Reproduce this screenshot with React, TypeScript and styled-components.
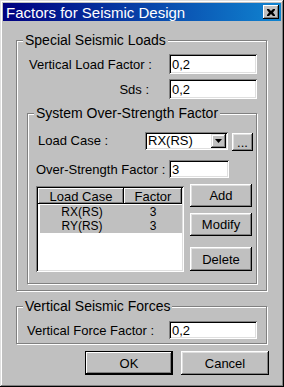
import styled, { createGlobalStyle } from "styled-components"

const GlobalStyle = createGlobalStyle`
  html, body {
    margin: 0;
    padding: 0;
    background: #c0c0c0;
  }
  body {
    font-family: "Liberation Sans", Arial, sans-serif;
    font-size: 13px;
    color: #000;
  }
`;

const Window = styled.div`
  width: 284px;
  height: 387px;
  box-sizing: border-box;
  padding: 3px;
  background: #c0c0c0;
  box-shadow: inset -1px -1px #000, inset 1px 1px #dfdfdf, inset -2px -2px #808080, inset 2px 2px #fff;
  display: flex;
  flex-direction: column;
`;

const TitleBar = styled.div`
  height: 18px;
  display: flex;
  align-items: center;
  justify-content: space-between;
  padding: 0 2px 0 3px;
  background: linear-gradient(to right, #000080, #1084d0);
  color: #fff;
  font-size: 15px;
`;

const CloseButton = styled.div`
  width: 16px;
  height: 14px;
  box-sizing: border-box;
  background: #c0c0c0;
  box-shadow: inset -1px -1px #000, inset 1px 1px #fff, inset -2px -2px #808080;
  display: flex;
  align-items: center;
  justify-content: center;
`;

const Body = styled.div`
  display: flex;
  flex-direction: column;
  padding-left: 13px;
`;

const GroupBox = styled.div<{ $width: number; $mt: number; $ml?: number; $pb: number; $pl: number }>`
  width: ${(p) => p.$width}px;
  box-sizing: border-box;
  margin-top: ${(p) => p.$mt}px;
  margin-left: ${(p) => p.$ml ?? 0}px;
  padding: 0 0 ${(p) => p.$pb}px ${(p) => p.$pl}px;
  border: 1px solid #808080;
  box-shadow: inset 1px 1px #fff, 1px 1px #fff;
  display: flex;
  flex-direction: column;
`;

const Legend = styled.div<{ $ml: number }>`
  width: fit-content;
  height: 14px;
  line-height: 14px;
  margin: -8px 0 0 ${(p) => p.$ml}px;
  padding: 0 2px;
  background: #c0c0c0;
  font-size: 14px;
  white-space: nowrap;
`;

const Row = styled.div<{ $mt: number }>`
  display: flex;
  align-items: center;
  margin-top: ${(p) => p.$mt}px;
`;

const Label = styled.div<{ $width: number; $right?: boolean; $ml?: number }>`
  width: ${(p) => p.$width}px;
  margin-left: ${(p) => p.$ml ?? 0}px;
  text-align: ${(p) => (p.$right ? "right" : "left")};
  white-space: nowrap;
  flex-shrink: 0;
`;

const TextBox = styled.div<{ $width: number; $height: number; $ml?: number }>`
  width: ${(p) => p.$width}px;
  height: ${(p) => p.$height}px;
  margin-left: ${(p) => p.$ml ?? 0}px;
  box-sizing: border-box;
  padding: 0 3px;
  background: #fff;
  box-shadow: inset 1px 1px #808080, inset -1px -1px #fff, inset 2px 2px #000, inset -2px -2px #dfdfdf;
  display: flex;
  align-items: center;
  font-size: 13px;
  flex-shrink: 0;
`;

const Combo = styled(TextBox)`
  padding-right: 2px;
  justify-content: space-between;
`;

const DropButton = styled.div`
  width: 15px;
  height: 14px;
  box-sizing: border-box;
  background: #c0c0c0;
  box-shadow: inset -1px -1px #000, inset 1px 1px #dfdfdf, inset -2px -2px #808080, inset 2px 2px #fff;
  display: flex;
  align-items: center;
  justify-content: center;
`;

const Button = styled.div<{ $width: number; $height: number; $mt?: number; $ml?: number; $default?: boolean }>`
  width: ${(p) => p.$width}px;
  height: ${(p) => p.$height}px;
  margin-top: ${(p) => p.$mt ?? 0}px;
  margin-left: ${(p) => p.$ml ?? 0}px;
  box-sizing: border-box;
  background: #c0c0c0;
  display: flex;
  align-items: center;
  justify-content: center;
  font-size: 13px;
  flex-shrink: 0;
  box-shadow: ${(p) =>
    p.$default
      ? "inset 0 0 0 1px #000, inset -2px -2px #000, inset 2px 2px #fff, inset -3px -3px #808080"
      : "inset -1px -1px #000, inset 1px 1px #fff, inset -2px -2px #808080, inset 2px 2px #dfdfdf"};
`;

const ListRow = styled.div`
  display: flex;
  align-items: flex-start;
  margin-top: 6px;
  gap: 6px;
`;

const ListView = styled.div`
  width: 148px;
  height: 86px;
  margin-top: 2px;
  box-sizing: border-box;
  padding: 2px;
  background: #fff;
  box-shadow: inset 1px 1px #808080, inset -1px -1px #fff, inset 2px 2px #000, inset -2px -2px #dfdfdf;
  display: flex;
  flex-direction: column;
`;

const HeaderRow = styled.div`
  display: flex;
  height: 16px;
`;

const HeaderCell = styled.div<{ $width?: number }>`
  ${(p) => (p.$width ? `width: ${p.$width}px;` : "flex: 1;")}
  box-sizing: border-box;
  background: #c0c0c0;
  box-shadow: inset -1px -1px #000, inset 1px 1px #fff, inset -2px -2px #808080;
  display: flex;
  align-items: center;
  justify-content: center;
  font-size: 13px;
`;

const ItemRow = styled.div<{ $first?: boolean }>`
  display: flex;
  height: 14px;
  line-height: 14px;
  margin-left: 2px;
  margin-top: ${(p) => (p.$first ? 1 : 0)}px;
  background: #c0c0c0;
  font-size: 12px;
`;

const ItemCell = styled.div<{ $width?: number }>`
  ${(p) => (p.$width ? `width: ${p.$width}px;` : "flex: 1;")}
  text-align: center;
`;

const ButtonColumn = styled.div`
  display: flex;
  flex-direction: column;
`;

const Footer = styled.div`
  display: flex;
  justify-content: flex-end;
  gap: 8px;
  margin-top: 7px;
  padding-right: 12px;
`;

const rows = [
  { name: "RX(RS)", factor: "3" },
  { name: "RY(RS)", factor: "3" },
]

const App = () => {
  return (
    <>
      <GlobalStyle />
      <Window>
        <TitleBar>
          <span>Factors for Seismic Design</span>
          <CloseButton>
            <svg width="8" height="7" viewBox="0 0 8 7">
              <path d="M0 0h2l2 2 2-2h2v1L6 3.5 8 6v1H6L4 5 2 7H0V6l2-2.5L0 1z" fill="#000" />
            </svg>
          </CloseButton>
        </TitleBar>
        <Body>
          <GroupBox $width={251} $mt={19} $pb={6} $pl={0}>
            <Legend $ml={6}>Special Seismic Loads</Legend>
            <Row $mt={7}>
              <Label $width={120} $ml={12} $right>Vertical Load Factor :</Label>
              <TextBox $width={88} $height={20} $ml={20}>0,2</TextBox>
            </Row>
            <Row $mt={5}>
              <Label $width={120} $ml={12} $right>Sds :</Label>
              <TextBox $width={88} $height={20} $ml={20}>0,2</TextBox>
            </Row>

            <GroupBox $width={230} $mt={14} $ml={10} $pb={11} $pl={8}>
              <Legend $ml={-2}>System Over-Strength Factor</Legend>
              <Row $mt={10}>
                <Label $width={107} $ml={2}>Load Case :</Label>
                <Combo $width={83} $height={18}>
                  RX(RS)
                  <DropButton>
                    <svg width="7" height="4" viewBox="0 0 7 4">
                      <path d="M0 0h7L3.5 4z" fill="#000" />
                    </svg>
                  </DropButton>
                </Combo>
                <Button $width={21} $height={18} $mt={3} $ml={4}>...</Button>
              </Row>
              <Row $mt={9}>
                <Label $width={133}>Over-Strength Factor :</Label>
                <TextBox $width={60} $height={18}>3</TextBox>
              </Row>
              <ListRow>
                <ListView>
                  <HeaderRow>
                    <HeaderCell $width={86}>Load Case</HeaderCell>
                    <HeaderCell>Factor</HeaderCell>
                  </HeaderRow>
                  {rows.map((r, i) => (
                    <ItemRow key={r.name} $first={i === 0}>
                      <ItemCell $width={84}>{r.name}</ItemCell>
                      <ItemCell>{r.factor}</ItemCell>
                    </ItemRow>
                  ))}
                </ListView>
                <ButtonColumn>
                  <Button $width={62} $height={23}>Add</Button>
                  <Button $width={62} $height={23} $mt={6}>Modify</Button>
                  <Button $width={62} $height={24} $mt={11}>Delete</Button>
                </ButtonColumn>
              </ListRow>
            </GroupBox>
          </GroupBox>

          <GroupBox $width={251} $mt={15} $pb={4} $pl={0}>
            <Legend $ml={6}>Vertical Seismic Forces</Legend>
            <Row $mt={8}>
              <Label $width={142} $ml={10}>Vertical Force Factor :</Label>
              <TextBox $width={88} $height={18}>0,2</TextBox>
            </Row>
          </GroupBox>
        </Body>
        <Footer>
          <Button $width={88} $height={24} $default>OK</Button>
          <Button $width={88} $height={24}>Cancel</Button>
        </Footer>
      </Window>
    </>
  )
}

export default App
